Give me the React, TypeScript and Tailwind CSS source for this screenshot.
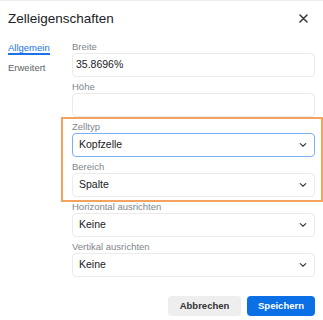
import React from "react";

const Chevron = () => (
  <svg width="8" height="8" viewBox="0 0 8 8" className="shrink-0">
    <path d="M1.2 2.6 L4 5.2 L6.8 2.6" fill="none" stroke="#3c4043" strokeWidth="1.2" strokeLinecap="round" strokeLinejoin="round" />
  </svg>
);

function Field({ label, children }: { label: string; children: React.ReactNode }) {
  return (
    <div className="flex flex-col">
      <div className="h-4 pt-[4px] text-[9.5px] leading-[12px] text-[#80868b]">{label}</div>
      {children}
    </div>
  );
}

function Select({ value, focused }: { value: string; focused?: boolean }) {
  return (
    <div
      className={
        focused
          ? "h-6 flex items-center justify-between pl-[6px] pr-[7px] rounded-[4px] border-[1.5px] border-[#7aaef5] text-[10.5px] text-[#202124]"
          : "h-6 flex items-center justify-between pl-[6px] pr-[7px] rounded-[4px] border border-[#ebebeb] text-[10.5px] text-[#202124]"
      }
    >
      <span>{value}</span>
      <Chevron />
    </div>
  );
}

export default function App() {
  return (
    <div
      className="relative w-[323px] h-[320px] bg-white overflow-hidden border-t border-[#ededed]"
      style={{ fontFamily: '"Liberation Sans", Arial, sans-serif' }}
    >
      <div className="h-[36px] flex items-start justify-between pl-2 pr-[15px] pt-[8px]">
        <div className="text-[13.5px] leading-[20px] text-[#202124]">Zelleigenschaften</div>
        <svg width="9" height="9" viewBox="0 0 9 9" className="mt-[5px]">
          <path d="M1 1 L8 8 M8 1 L1 8" stroke="#3c4043" strokeWidth="1.6" strokeLinecap="round" />
        </svg>
      </div>
      <div className="flex">
        <div className="w-[72px] pl-2 flex flex-col">
          <div className="pt-[4px] text-[9.5px] text-[#1a73e8]">
            <span className="inline-block leading-[11px] border-b-2 border-[#1a73e8]">Allgemein</span>
          </div>
          <div className="mt-[7px] text-[9.5px] leading-[12px] text-[#5f6368]">Erweitert</div>
        </div>
        <div className="w-[243px] flex flex-col">
          <Field label="Breite">
            <div className="h-6 flex items-center pl-[3px] rounded-[4px] border border-[#ebebeb] text-[10.5px] text-[#202124]">35.8696%</div>
          </Field>
          <Field label="Höhe">
            <div className="h-6 rounded-[4px] border border-[#ebebeb]"></div>
          </Field>
          <Field label="Zelltyp">
            <Select value="Kopfzelle" focused />
          </Field>
          <Field label="Bereich">
            <Select value="Spalte" />
          </Field>
          <Field label="Horizontal ausrichten">
            <Select value="Keine" />
          </Field>
          <Field label="Vertikal ausrichten">
            <Select value="Keine" />
          </Field>
        </div>
      </div>
      <div className="flex justify-end gap-[6px] pr-2 mt-[19px]">
        <button className="h-[20px] w-[73px] rounded-[4px] bg-[#eeeeee] text-[9.5px] font-bold text-[#333]">Abbrechen</button>
        <button className="h-[20px] w-[68px] rounded-[4px] bg-[#0b6fe6] text-[9.5px] font-bold text-white">Speichern</button>
      </div>
      <div className="absolute left-[61px] top-[116px] w-[262px] h-[85px] border-2 border-[#f3a35f] pointer-events-none"></div>
    </div>
  );
}
